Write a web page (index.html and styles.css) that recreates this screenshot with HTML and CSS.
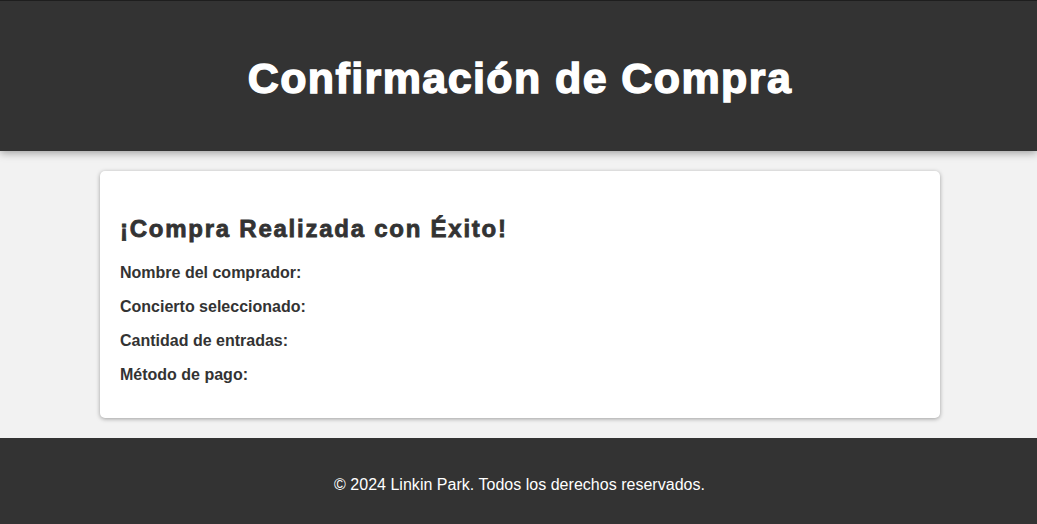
FILE: index.html
```html
<!DOCTYPE html>
<html lang="es">
<head>
<meta charset="utf-8">
<title>Confirmación de Compra</title>
<link rel="stylesheet" href="styles.css">
</head>
<body>
<header class="site-header">
  <h1 class="site-title">Confirmación de Compra</h1>
</header>
<main class="main">
  <section class="card">
    <h2 class="card-title">¡Compra Realizada con Éxito!</h2>
    <p class="row"><strong>Nombre del comprador:</strong> <span></span></p>
    <p class="row"><strong>Concierto seleccionado:</strong> <span></span></p>
    <p class="row"><strong>Cantidad de entradas:</strong> <span></span></p>
    <p class="row"><strong>Método de pago:</strong> <span></span></p>
  </section>
</main>
<footer class="site-footer">
  <p class="footer-text">© 2024 Linkin Park. Todos los derechos reservados.</p>
</footer>
</body>
</html>
```

FILE: styles.css
```css
html, body {
  margin: 0;
  padding: 0;
}
body {
  font-family: "Liberation Sans", Arial, sans-serif;
  background: #f2f2f2;
  color: #333;
}
.site-header {
  background: #333;
  border-top: 1px solid #1e1e1e;
  height: 150px;
  display: flex;
  align-items: center;
  justify-content: center;
  box-shadow: 0 2px 8px rgba(0, 0, 0, 0.35);
  position: relative;
}
.site-title {
  margin: 0;
  color: #fff;
  font-family: "Arial Black", "Liberation Sans", Arial, sans-serif;
  font-weight: 900;
  font-size: 43px;
  letter-spacing: 1.4px;
  -webkit-text-stroke: 1.4px #fff;
  padding: 4px 0 0 3px;
}
.main {
  padding: 20px 0 20px 100px;
}
.card {
  max-width: 800px;
  background: #fff;
  border-radius: 5px;
  box-shadow: 0 1px 4px rgba(0, 0, 0, 0.35);
  padding: 22px 20px 18px;
}
.card-title {
  margin: 20px 0 20px;
  font-size: 24px;
  line-height: 31px;
  font-weight: bold;
  letter-spacing: 1.75px;
  -webkit-text-stroke: 0.8px #333;
}
.row {
  margin: 16px 0;
  font-size: 16px;
  line-height: 18px;
}
.site-footer {
  background: #333;
  color: #fff;
  text-align: center;
  padding: 22px 20px 18px 22px;
}
.footer-text {
  margin: 16px 0;
  font-size: 16px;
  letter-spacing: 0.02px;
}
```
